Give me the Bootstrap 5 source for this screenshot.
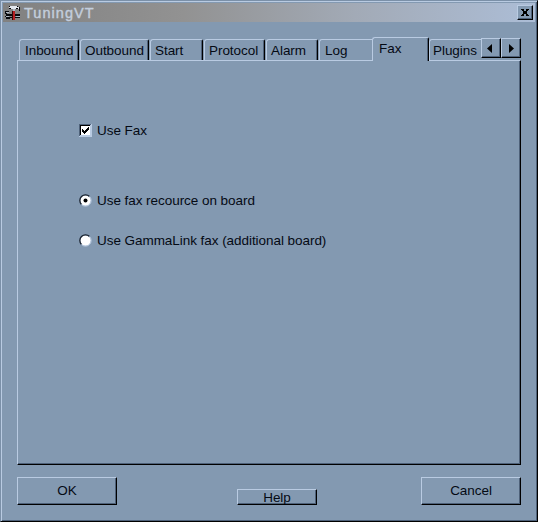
<!DOCTYPE html>
<html lang="en">
<head>
<meta charset="utf-8">
<meta name="viewport" content="width=device-width, initial-scale=1">
<title>TuningVT</title>
<link href="https://cdn.jsdelivr.net/npm/bootstrap@5.3.0/dist/css/bootstrap.min.css" rel="stylesheet">
<style>
:root{--face:#8399b1;--lite:#b9cbe2;--shade:#4e6179;--ink:#050a14}
body{background:var(--face);font:13.5px/16px "Liberation Sans",Arial,sans-serif;letter-spacing:-.05px;color:var(--ink)}
.win{width:538px;height:522px;background:var(--face);border:1px solid #7b90a8;border-right-color:#000;border-bottom-color:#000;
 box-shadow:inset 1px 1px var(--lite),inset -1px -1px var(--shade);padding:2px}
.caption{height:19px;background:linear-gradient(90deg,#818181,#929292 34%,#a2aab6 66%,#acbdd6)}
.caption svg{margin-left:2px}
.caption-text{font-size:14.5px;letter-spacing:1.05px;color:#c3cedd;-webkit-text-stroke:.4px #c3cedd;margin-left:3px;padding-top:1px}
.raised{background:var(--face);color:var(--ink);border:1px solid;border-color:var(--lite) #000 #000 var(--lite);box-shadow:inset -1px -1px var(--shade);border-radius:0;padding:0;font:inherit;letter-spacing:inherit}
.close-btn{width:16px;height:15px;margin-right:2px}
.tabstrip{margin:15px 0 0 16px;height:23px;width:502px}
.tab-item{height:21px;border:0;border-left:1px solid var(--lite);border-top:1px solid var(--lite);border-right:1px solid #000;box-shadow:inset -1px 0 var(--shade);
 border-radius:3px 2px 0 0;background:var(--face);padding:3px 0 0 4px;color:var(--ink);letter-spacing:inherit;font:inherit;white-space:nowrap;margin-right:1px;flex:none;display:flex;align-items:flex-start}
.tab-item.open{height:24px;padding-left:6px;position:relative;z-index:1;margin:0 0 -1px}
.tab-item.no-edge{border-right:0;border-top-right-radius:0;box-shadow:none;margin-right:0}
.scroll-btn{height:20px;flex:none;margin-top:1px}
.page-pane{margin-left:14px;width:504px;height:405px;border:1px solid;border-color:var(--lite) #000 #000 var(--lite);box-shadow:inset -1px -1px var(--shade);padding:61px 0 0 61px}
.opt{height:16px}
.opt svg{margin-right:5px;flex:none}
.opt span{padding-top:2px}
.opt + .opt{margin-top:24px}
.opt + .opt.first-radio{margin-top:54px}
.actions{margin:12px 0 0 14px;width:504px;height:28px}
.big-btn{width:100px;height:28px}
.small-btn{width:80px;height:16px;line-height:16px;overflow:hidden;margin-left:120px}
</style>
</head>
<body class="m-0 overflow-hidden">
<main class="win">
 <header class="caption d-flex align-items-center">
  <svg width="16" height="16" viewBox="0 0 16 16" shape-rendering="crispEdges">
   <path fill="#08090d" d="M4 1h9v1h2v4h-1V4H4zM0 6h4v2H2v1h13v2H3v1H0v-1h1V9H0zM1 12h14v1H5v1H1z"/>
   <path fill="#e2e8ef" d="M5 1h7v1h2v2h-1V3h-2v1H6V3H4V2h1z"/>
   <path fill="#aeb8c5" d="M1 7h3v1H1zM11 11h4v1h-4zM1 11h3v1H1zM8 4h2v2H8z"/>
   <path fill="#b51d20" d="M8 6h2v9H8z"/><path fill="#320608" d="M7 6h1v9H7z"/>
  </svg>
  <span class="caption-text">TuningVT</span>
  <button class="raised close-btn d-flex align-items-center justify-content-center ms-auto" aria-label="Close">
   <svg class="m-0" width="8" height="7" viewBox="0 0 8 7" shape-rendering="crispEdges"><path d="M0 0h3v1H0zM5 0h3v1H5zM1 1h2v1H1zM5 1h2v1H5zM2 2h4v3H2zM1 5h2v1H1zM5 5h2v1H5zM0 6h3v1H0zM5 6h3v1H5z"/></svg>
  </button>
 </header>
 <nav class="tabstrip d-flex align-items-end">
  <button class="tab-item" style="width:60px;padding-left:5px">Inbound</button>
  <button class="tab-item" style="width:69px">Outbound</button>
  <button class="tab-item" style="width:53px">Start</button>
  <button class="tab-item" style="width:61px">Protocol</button>
  <button class="tab-item" style="width:52px">Alarm</button>
  <button class="tab-item no-edge" style="width:53px;padding-left:5px">Log</button>
  <button class="tab-item open" style="width:57px">Fax</button>
  <button class="tab-item no-edge" style="width:52px;padding-left:3px">Plugins</button>
  <button class="raised scroll-btn d-flex align-items-center justify-content-center align-self-start" style="width:20px" aria-label="Scroll left">
   <svg class="me-1" width="5" height="9" viewBox="0 0 5 9"><path d="M5 0v9L0 4.5z"/></svg></button>
  <button class="raised scroll-btn d-flex align-items-center justify-content-center align-self-start" style="width:20px" aria-label="Scroll right">
   <svg width="5" height="9" viewBox="0 0 5 9"><path d="M0 0v9l5-4.5z"/></svg></button>
 </nav>
 <section class="page-pane">
  <div class="opt d-flex align-items-center">
   <svg width="13" height="13" viewBox="0 0 13 13" shape-rendering="crispEdges"><path fill="#b9cbe2" d="M0 0h13v13H0z"/><path fill="#4e6179" d="M0 0h12v1H1v11H0z"/><path d="M1 1h10v1H2v9H1z"/><path fill="#fff" d="M2 2h9v9H2z"/><path d="M3 5h1v1h1v1h1V6h1V5h1V4h1V3h1v3H9v1H8v1H7v1H6v1H5V9H4V8H3z"/></svg>
   <span>Use Fax</span>
  </div>
  <div class="opt first-radio d-flex align-items-center">
   <svg width="13" height="13" viewBox="0 0 13 13"><circle cx="6.5" cy="6.5" r="5.3" fill="#fff"/><path d="M2.5 10.5A5.6 5.6 0 0 1 10.5 2.5" fill="none" stroke="#17202d" stroke-width="1.3"/><path d="M2.5 10.5A5.6 5.6 0 0 0 10.5 2.5" fill="none" stroke="#b9cbe2"/><circle cx="6.5" cy="6.5" r="2"/></svg>
   <span>Use fax recource on board</span>
  </div>
  <div class="opt d-flex align-items-center">
   <svg width="13" height="13" viewBox="0 0 13 13"><circle cx="6.5" cy="6.5" r="5.3" fill="#fff"/><path d="M2.5 10.5A5.6 5.6 0 0 1 10.5 2.5" fill="none" stroke="#17202d" stroke-width="1.3"/><path d="M2.5 10.5A5.6 5.6 0 0 0 10.5 2.5" fill="none" stroke="#b9cbe2"/></svg>
   <span>Use GammaLink fax (additional board)</span>
  </div>
 </section>
 <footer class="actions d-flex align-items-end">
  <button class="raised big-btn">OK</button>
  <button class="raised small-btn">Help</button>
  <button class="raised big-btn ms-auto">Cancel</button>
 </footer>
</main>
<script src="https://cdn.jsdelivr.net/npm/bootstrap@5.3.0/dist/js/bootstrap.bundle.min.js"></script>
</body>
</html>
